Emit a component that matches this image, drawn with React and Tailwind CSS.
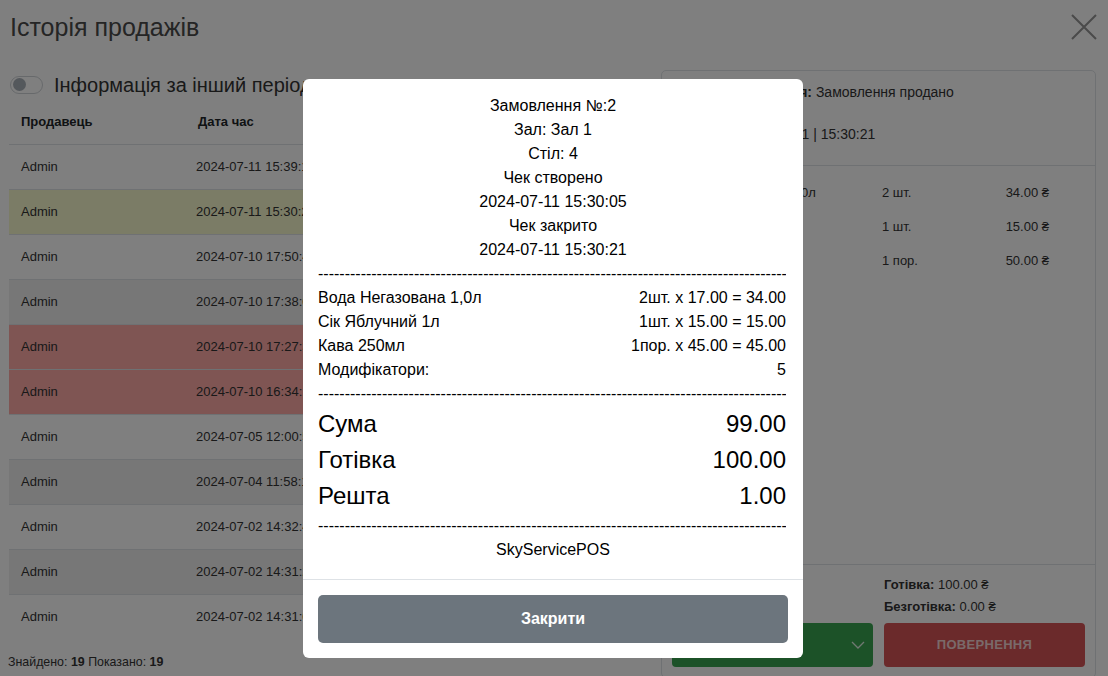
import React from "react";

const rows = [
  { d: "2024-07-11 15:39:12", sum: "120.00", bg: "bg-white" },
  { d: "2024-07-11 15:30:21", sum: "99.00", bg: "bg-[#f6f8cc]" },
  { d: "2024-07-10 17:50:44", sum: "45.00", bg: "bg-white" },
  { d: "2024-07-10 17:38:02", sum: "64.00", bg: "bg-[#eeeeee]" },
  { d: "2024-07-10 17:27:31", sum: "34.00", bg: "bg-[#feaaa6]" },
  { d: "2024-07-10 16:34:10", sum: "15.00", bg: "bg-[#feaaa6]" },
  { d: "2024-07-05 12:00:55", sum: "50.00", bg: "bg-white" },
  { d: "2024-07-04 11:58:18", sum: "17.00", bg: "bg-[#eeeeee]" },
  { d: "2024-07-02 14:32:40", sum: "79.00", bg: "bg-white" },
  { d: "2024-07-02 14:31:26", sum: "34.00", bg: "bg-[#eeeeee]" },
  { d: "2024-07-02 14:31:03", sum: "45.00", bg: "bg-white" },
];

const items = [
  { name: "Вода Негазована 1,0л", qty: "2 шт.", price: "34.00 ₴" },
  { name: "Сік Яблучний 1л", qty: "1 шт.", price: "15.00 ₴" },
  { name: "Кава 250мл", qty: "1 пор.", price: "50.00 ₴" },
];

const receiptItems = [
  ["Вода Негазована 1,0л", "2шт. x 17.00 = 34.00"],
  ["Сік Яблучний 1л", "1шт. x 15.00 = 15.00"],
  ["Кава 250мл", "1пор. x 45.00 = 45.00"],
  ["Модифікатори:", "5"],
];

const Dashes = () => (
  <div className="overflow-hidden whitespace-nowrap leading-[24px]">
    {"-".repeat(88)}
  </div>
);

const Toggle = () => (
  <div className="w-[33px] h-[18px] rounded-full border border-[#cfd3d7] bg-white flex items-center px-[2px]">
    <div className="w-[13px] h-[13px] rounded-full bg-[#a9b0b8]" />
  </div>
);

export default function App() {
  return (
    <div
      className="relative w-[1108px] h-[676px] overflow-hidden bg-white text-[#333]"
      style={{ fontFamily: '"Liberation Sans", "DejaVu Sans", Arial, sans-serif' }}
    >
      {/* Page header */}
      <div className="h-[55px] flex items-center justify-between pl-[10px] pr-[11px]">
        <h1 className="text-[25px] text-[#4a4a4a] leading-none -mt-[1px]">Історія продажів</h1>
        <svg width="26" height="26" viewBox="0 0 26 26" className="-mt-[1px]">
          <path d="M1 1 L25 25 M25 1 L1 25" stroke="#949494" strokeWidth="2" />
        </svg>
      </div>

      <div className="flex pl-[9px]">
        {/* Left: sales list */}
        <div className="w-[641px] pt-[17px]">
          <div className="h-[25px] flex items-center gap-[12px] pl-[1px]">
            <Toggle />
            <span className="text-[20px] leading-none -ml-[1px]">Інформація за інший період</span>
          </div>
          <div className="mt-[2px]">
            <div className="h-[45px] flex items-center text-[13px] font-bold text-[#212529]">
              <div className="w-[175px] pl-[12px]">Продавець</div>
              <div className="w-[170px] pl-[14px]">Дата час</div>
              <div className="w-[120px] pl-[12px]">Сума</div>
              <div className="flex-1 pl-[12px]">Оплата</div>
            </div>
            {rows.map((r, i) => (
              <div
                key={i}
                className={`h-[45px] flex items-center text-[13px] border-t border-[#dee2e6] ${r.bg}`}
              >
                <div className="w-[175px] pl-[12px]">Admin</div>
                <div className="w-[170px] pl-[12px]">{r.d}</div>
                <div className="w-[120px] pl-[12px]">{r.sum} ₴</div>
                <div className="flex-1 pl-[12px]">Готівка</div>
              </div>
            ))}
          </div>
          <div className="mt-[15px] text-[12.4px] leading-[16px] -ml-[1px]">
            Знайдено: <b>19</b> Показано: <b>19</b>
          </div>
        </div>

        {/* Right: order details */}
        <div className="ml-[11px] mt-[15px] w-[435px] h-[608px] border border-[#dee2e6] rounded-[5px] flex flex-col text-[13px]">
          <div className="pl-[11px] pr-[12px] pt-[11px] pb-[21px] border-b border-[#dee2e6] leading-[20px] text-[14px]">
            <div>
              <b>Статус замовлення:</b> Замовлення продано
            </div>
            <div className="mt-[22px] pl-[6px]">
              Закрито: 2024-07-11 | 15:30:21
            </div>
          </div>
          <div className="flex-1 pt-[10px] pl-[21px] pr-[12px]">
            {items.map((it) => (
              <div key={it.name} className="h-[34px] grid grid-cols-[199px_110px_57px] items-center">
                <div>{it.name}</div>
                <div>{it.qty}</div>
                <div className="text-right whitespace-nowrap">{it.price}</div>
              </div>
            ))}
          </div>
          <div className="border-t border-[#dee2e6] px-[10px] pt-[9px] pb-[10px]">
            <div className="grid grid-cols-2 gap-x-[11px] leading-[22px]">
              <div>
                <div><b>Сума:</b> 99.00 ₴</div>
                <div><b>Решта:</b> 1.00 ₴</div>
              </div>
              <div>
                <div><b>Готівка:</b> 100.00 ₴</div>
                <div><b>Безготівка:</b> 0.00 ₴</div>
              </div>
            </div>
            <div className="mt-[5px] grid grid-cols-2 gap-x-[11px]">
              <button className="h-[44px] rounded-[4px] bg-[#38a450] text-white text-[13px] font-bold flex items-center justify-between pl-[50px] pr-[8px]">
                <span>ДРУК</span>
                <svg width="14" height="8" viewBox="0 0 14 8">
                  <path d="M1 1 L7 7 L13 1" fill="none" stroke="rgba(255,255,255,0.85)" strokeWidth="1.3" />
                </svg>
              </button>
              <button className="h-[44px] rounded-[4px] bg-[#d65456] text-white/75 text-[13px] font-bold tracking-[0.3px]">
                ПОВЕРНЕННЯ
              </button>
            </div>
          </div>
        </div>
      </div>

      {/* Modal overlay */}
      <div className="absolute inset-0 bg-black/50">
        <div className="mt-[79px] ml-[303px] w-[500px] bg-white rounded-[6px] text-black">
          <div className="pl-[15px] pr-[17px] pt-[15px] pb-[17px] text-[16px] leading-[24px]">
            <div className="text-center pl-[2px]">
              <div>Замовлення №:2</div>
              <div>Зал: Зал 1</div>
              <div>Стіл: 4</div>
              <div>Чек створено</div>
              <div>2024-07-11 15:30:05</div>
              <div>Чек закрито</div>
              <div>2024-07-11 15:30:21</div>
            </div>
            <Dashes />
            {receiptItems.map(([a, b]) => (
              <div key={a} className="flex justify-between">
                <span>{a}</span>
                <span>{b}</span>
              </div>
            ))}
            <Dashes />
            <div className="text-[24px] leading-[36px]">
              <div className="flex justify-between"><span>Сума</span><span>99.00</span></div>
              <div className="flex justify-between"><span>Готівка</span><span>100.00</span></div>
              <div className="flex justify-between"><span>Решта</span><span>1.00</span></div>
            </div>
            <Dashes />
            <div className="text-center pl-[2px]">SkyServicePOS</div>
          </div>
          <div className="border-t border-[#dee2e6] p-[15px]">
            <button className="w-full h-[48px] rounded-[5px] bg-[#6c757d] text-white text-[16px] font-bold">
              Закрити
            </button>
          </div>
        </div>
      </div>
    </div>
  );
}
